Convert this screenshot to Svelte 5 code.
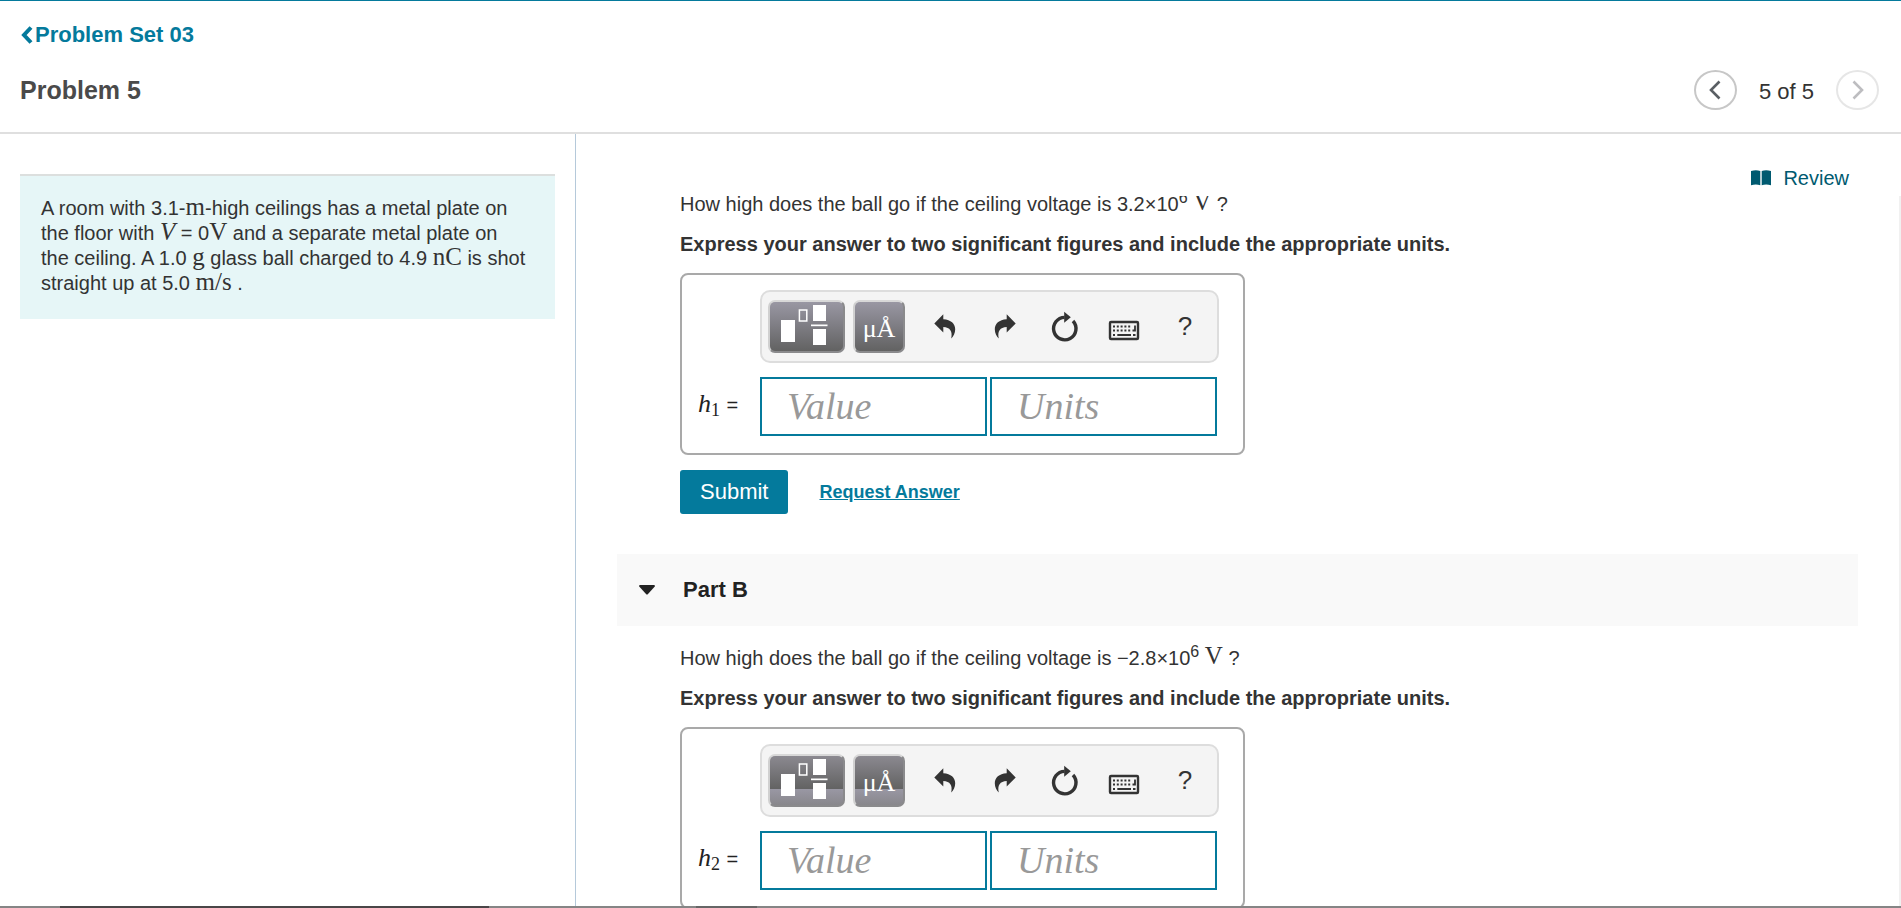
<script>
  const parts = [
    { id: 1, voltage: '3.2×10', split: false },
    { id: 2, voltage: '−2.8×10', split: true }
  ];
</script>

{#snippet part(p)}
  <div class="part">
    <p class="question">
      How high does the ball go if the ceiling voltage is {p.voltage}<sup>6</sup>&nbsp;<span class="math">V</span>&nbsp;?
    </p>
    <p class="instruction">Express your answer to two significant figures and include the appropriate units.</p>

    <div class="answer">
      <div class="toolbar" role="toolbar" aria-label="Math tools">
        <button class="tool dark templates" class:split={p.split} aria-label="Templates">
          <svg viewBox="0 0 72 49" width="72" height="49">
            <g fill="#fff">
              <rect x="11" y="18" width="14" height="22" />
              <rect x="43" y="3" width="13" height="16" />
              <rect x="43" y="27" width="13" height="16" />
              <rect x="41" y="22.5" width="16.5" height="1.7" />
            </g>
            <rect x="29.4" y="8" width="7.4" height="11" fill="none" stroke="#fff" stroke-width="1.5" />
          </svg>
        </button>
        <button class="tool dark symbols" class:split={p.split} aria-label="Symbols">μÅ</button>
        <div class="plain">
          <button class="tool" aria-label="Undo">
            <svg viewBox="0 0 60 53" width="60" height="53">
              <path d="M19.3 23.4 28.3 14.3V19.3C36 19.6 40.2 24 40.2 29.2C40.2 33 38.5 36.5 36.2 38.6C37.8 31.4 35 27.2 28.3 27V32.6Z" fill="#333" />
            </svg>
          </button>
          <button class="tool" aria-label="Redo">
            <svg viewBox="0 0 60 53" width="60" height="53">
              <path d="M40.7 23.4 31.7 14.3V19.3C24 19.6 19.8 24 19.8 29.2C19.8 33 21.5 36.5 23.8 38.6C22.2 31.4 25 27.2 31.7 27V32.6Z" fill="#333" />
            </svg>
          </button>
          <button class="tool" aria-label="Reset">
            <svg viewBox="0 0 60 53" width="60" height="53">
              <path d="M38 21A11.2 11.2 0 1 1 29.6 17.4" fill="none" stroke="#333" stroke-width="3.4" />
              <path d="M29.2 11.8 35.8 17.2 29.2 22.8Z" fill="#333" />
            </svg>
          </button>
          <button class="tool" aria-label="Keyboard shortcuts">
            <svg viewBox="0 0 60 53" width="60" height="53">
              <rect x="15" y="22" width="28" height="17" rx="1" fill="none" stroke="#333" stroke-width="2.4" />
              <path d="M18 26.5H36.5M18 30.5H36.5" stroke="#333" stroke-width="1.8" stroke-dasharray="2 1.8" />
              <path d="M18 35H20M22.3 35H36M38 35H40.5M40 25.5V31.4M37.5 30.5H40" fill="none" stroke="#333" stroke-width="1.8" />
            </svg>
          </button>
          <button class="tool help" aria-label="Help">?</button>
        </div>
      </div>

      <label class="variable" for="value-{p.id}"><i>h</i><sub>{p.id}</sub> <span>=</span></label>
      <div class="fields">
        <input id="value-{p.id}" type="text" placeholder="Value" />
        <input type="text" placeholder="Units" aria-label="Units" />
      </div>
    </div>
  </div>
{/snippet}

<div class="page">
  <header>
    <a class="back" href="#set">
      <svg viewBox="0 0 14 18" width="14" height="18" aria-hidden="true">
        <path d="M11 1.5 4 9 11 16.5" fill="none" stroke="currentColor" stroke-width="4" />
      </svg>Problem Set 03</a>
    <div class="title-row">
      <h1>Problem 5</h1>
      <nav aria-label="Problems">
        <button class="round" aria-label="Previous problem">
          <svg viewBox="0 0 12 20" width="12" height="20">
            <path d="M10.5 1.5 2 10 10.5 18.5" fill="none" stroke="#5a5f64" stroke-width="2.6" />
          </svg>
        </button>
        <span>5 of 5</span>
        <button class="round" disabled aria-label="Next problem">
          <svg viewBox="0 0 12 20" width="12" height="20">
            <path d="M1.5 1.5 10 10 1.5 18.5" fill="none" stroke="#bdbdc0" stroke-width="2.6" />
          </svg>
        </button>
      </nav>
    </div>
  </header>

  <main>
    <aside>
      <p class="prompt">
        A room with 3.1-<span class="math">m</span>-high ceilings has a metal plate on the floor with
        <i class="math">V</i> = 0<span class="math">V</span> and a separate metal plate on the ceiling. A 1.0
        <span class="math">g</span> glass ball charged to 4.9 <span class="math">nC</span> is shot straight up at
        5.0 <span class="math">m/s</span> .
      </p>
    </aside>

    <section class="work">
      <div class="review-row">
        <a class="review" href="#review">
          <svg viewBox="0 0 20 16" width="20" height="16" aria-hidden="true">
            <path d="M0 1Q5-.7 9.3 1V15.3Q5 13.8 0 15.3ZM10.7 1Q15-.7 20 1V15.3Q15 13.8 10.7 15.3Z" fill="currentColor" />
          </svg>Review</a>
      </div>
      <div class="scroller">
        {@render part(parts[0])}
        <div class="actions">
          <button class="submit">Submit</button>
          <a href="#answer">Request Answer</a>
        </div>
        <h2>
          <svg viewBox="0 0 16 10" width="16" height="10" aria-hidden="true">
            <path d="M0 1.2Q0 0 1.2 0H14.8Q16 0 16 1.2L9 9Q8 10 7 9Z" fill="#222" />
          </svg>Part B</h2>
        {@render part(parts[1])}
      </div>
    </section>
  </main>

  <footer><span></span><span></span></footer>
</div>

<style>
  :global(body) {
    background: #fff;
    color: #333;
    font-family: 'Liberation Sans', Arial, sans-serif;
    font-size: 20px;
  }
  .page {
    height: 100vh;
    display: flex;
    flex-direction: column;
    overflow: hidden;
    box-sizing: border-box;
    border-top: 1px solid #047a9c;
  }
  p, h1, h2 { margin: 0; }
  button { font-family: inherit; cursor: pointer; padding: 0; }
  svg { display: block; flex: none; }

  header {
    padding: 21px 22px 22px 20px;
    border-bottom: 2px solid #dfdfdf;
  }
  .back {
    display: inline-flex;
    align-items: center;
    gap: 1px;
    color: #047a9c;
    font-size: 22px;
    line-height: 26px;
    font-weight: bold;
    text-decoration: none;
  }
  .title-row {
    display: flex;
    align-items: center;
    justify-content: space-between;
    margin-top: 21px;
  }
  h1 { font-size: 25px; line-height: 40px; color: #4a4a4a; }
  nav {
    display: flex;
    align-items: center;
    gap: 22px;
    font-size: 22px;
    line-height: 36px;
    height: 40px;
  }
  nav span { padding-top: 4px; }
  .round {
    width: 43px;
    height: 40px;
    display: flex;
    align-items: center;
    justify-content: center;
    background: #fff;
    border: 2px solid #c7c7c7;
    border-radius: 50%;
  }
  .round:disabled { border-color: #e6e6e6; }

  main { flex: 1; min-height: 0; display: flex; }
  aside {
    flex: 0 0 30.3%;
    box-sizing: border-box;
    padding: 40px 20px 0;
    border-right: 1px solid #b5c9da;
  }
  .prompt {
    padding: 20px 28px 23px 21px;
    border-top: 2px solid #dcdfde;
    background: #e6f6f7;
    line-height: 25px;
  }
  .math {
    font-family: 'Liberation Serif', 'Times New Roman', serif;
    font-size: 25px;
    line-height: 20px;
  }

  .work { flex: 1; min-width: 0; display: flex; flex-direction: column; }
  .review-row {
    height: 62px;
    flex: none;
    box-sizing: border-box;
    padding: 32px 52px 0 0;
    display: flex;
    justify-content: flex-end;
  }
  .review {
    display: flex;
    align-items: center;
    gap: 12px;
    height: 24px;
    color: #005a70;
    text-decoration: none;
  }
  .scroller {
    flex: 1;
    min-height: 0;
    overflow: hidden;
    padding: 0 41px;
    border-right: 2px solid #f1f1f1;
  }
  .part { padding-left: 63px; margin-top: -4px; }
  .question { line-height: 24px; height: 24px; margin-bottom: 16px; }
  .question .math { vertical-align: 1px; }
  sup { font-size: 16px; line-height: 0; vertical-align: 8px; }
  .instruction { line-height: 24px; margin-bottom: 17px; font-weight: bold; }

  .answer {
    display: grid;
    grid-template-columns: 62px auto;
    justify-content: start;
    row-gap: 14px;
    width: 565px;
    max-width: 100%;
    box-sizing: border-box;
    padding: 15px 16px 17px;
    border: 2px solid #a9a9a9;
    border-radius: 8px;
  }
  .toolbar {
    grid-column: 2;
    display: flex;
    padding: 8px 6px;
    width: 459px;
    height: 73px;
    box-sizing: border-box;
    gap: 8px;
    background: #f4f4f4;
    border: 2px solid #ddd;
    border-radius: 10px;
  }
  .plain { display: flex; margin-left: 2px; margin-right: -8px; }
  .tool { flex: none; height: 53px; width: 60px; border: 0; background: none; color: #333; }
  .tool.dark {
    color: #fff;
    border: 2px solid #8a8a8c;
    border-top-color: #d8d8d8;
    border-left-color: #d0d0d0;
    border-radius: 7px;
    background: linear-gradient(#9997a3, #626262);
  }
  .tool.dark.split { background: linear-gradient(#8b8990, #626262 68%, #9997a3 68%, #88878c); }
  .tool.templates { width: 77px; }
  .tool.symbols {
    width: 52px;
    padding-top: 4px;
    font-family: 'Liberation Serif', 'Times New Roman', serif;
    font-size: 26px;
  }
  .help { font-size: 26px; }
  .variable {
    align-self: center;
    font-family: 'Liberation Serif', 'Times New Roman', serif;
    font-size: 26px;
    line-height: 30px;
    padding-bottom: 4px;
    color: #222;
    white-space: nowrap;
  }
  .variable sub { font-size: 18px; line-height: 0; vertical-align: -4px; }
  .variable span { font-family: 'Liberation Sans', Arial, sans-serif; font-size: 20px; }
  .fields { display: flex; gap: 3px; }
  input {
    width: 227px;
    height: 59px;
    box-sizing: border-box;
    padding: 0 25px 2px;
    border: 2px solid #047a9c;
    border-radius: 0;
    background: #fff;
    font-family: 'Liberation Serif', 'Times New Roman', serif;
    font-size: 38px;
    font-style: italic;
  }
  input::placeholder { color: #999; opacity: 1; }

  .actions {
    display: flex;
    align-items: center;
    gap: 31px;
    padding: 15px 0 40px 63px;
  }
  .submit {
    height: 44px;
    padding: 0 20px;
    border: 0;
    border-radius: 3px;
    background: #047a9c;
    color: #fff;
    font-size: 22px;
  }
  .actions a { color: #047a9c; font-size: 18px; font-weight: bold; }
  h2 {
    display: flex;
    align-items: center;
    gap: 28px;
    height: 72px;
    padding-left: 22px;
    margin-bottom: 24px;
    background: #f9f9f9;
    color: #222;
    font-size: 22px;
  }
  footer { flex: none; display: flex; height: 2px; background: #858585; }
  footer span { width: 429px; margin-left: 60px; background: #4a4648; }
  footer span + span { width: 61px; margin-left: 207px; background: #666; }
</style>
